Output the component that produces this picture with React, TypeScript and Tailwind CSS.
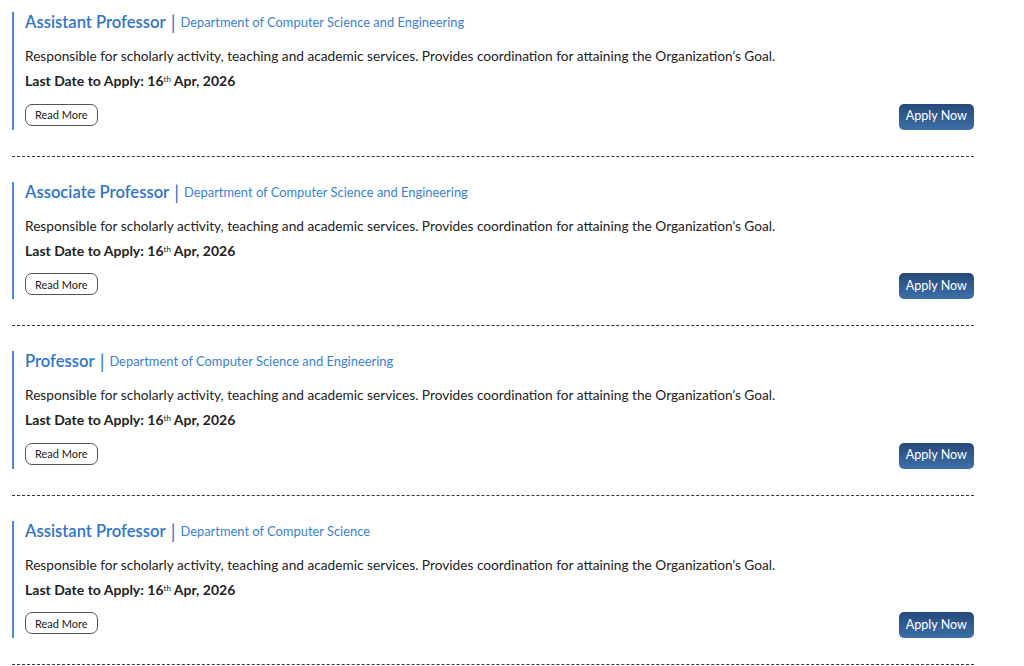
const jobs = [
  { title: 'Assistant Professor', dept: 'Department of Computer Science and Engineering' },
  { title: 'Associate Professor', dept: 'Department of Computer Science and Engineering' },
  { title: 'Professor', dept: 'Department of Computer Science and Engineering' },
  { title: 'Assistant Professor', dept: 'Department of Computer Science' },
]

function JobCard({ title, dept, first }: { title: string; dept: string; first: boolean }) {
  return (
    <div className={first ? 'border-b border-dashed border-[#333] pb-[26px] pt-[12px]' : 'border-b border-dashed border-[#333] pb-[26px] pt-[25px]'}>
      <div className="flex items-end justify-between border-l-2 border-[#4a8ad8] pl-[11px]">
        <div className="flex flex-col">
          <div className="flex h-[21px] items-center leading-none">
            <span className="text-[16.6px] font-semibold text-[#2f74cc]">{title}</span>
            <span className="mx-[5px] text-[19px] font-normal text-[#2f74cc]">|</span>
            <span className="text-[12.9px] text-[#3a7fd5]">{dept}</span>
          </div>
          <p className="mt-[14px] text-[13.7px] leading-[18px] text-[#222]">
            Responsible for scholarly activity, teaching and academic services. Provides coordination for attaining the Organization’s Goal.
          </p>
          <p className="mt-[7px] text-[14px] font-bold leading-[18px] text-[#222]">
            Last Date to Apply: 16<sup className="text-[8px] font-normal">th</sup> Apr, 2026
          </p>
          <div className="mt-[11px] pb-[4px]">
            <button className="h-[22px] rounded-[7px] border border-[#555] px-[9px] text-[11px] leading-none text-[#222]">
              Read More
            </button>
          </div>
        </div>
        <button className="h-[26px] rounded-[5px] bg-gradient-to-b from-[#26497a] to-[#3d70a8] px-[7px] text-[12.6px] leading-none text-white">
          Apply Now
        </button>
      </div>
    </div>
  )
}

export default function App() {
  return (
    <div className="min-h-screen bg-white font-['Lato',sans-serif]">
      <div className="ml-[12px] w-[962px]">
        {jobs.map((job, i) => (
          <JobCard key={i} first={i === 0} {...job} />
        ))}
      </div>
    </div>
  )
}
